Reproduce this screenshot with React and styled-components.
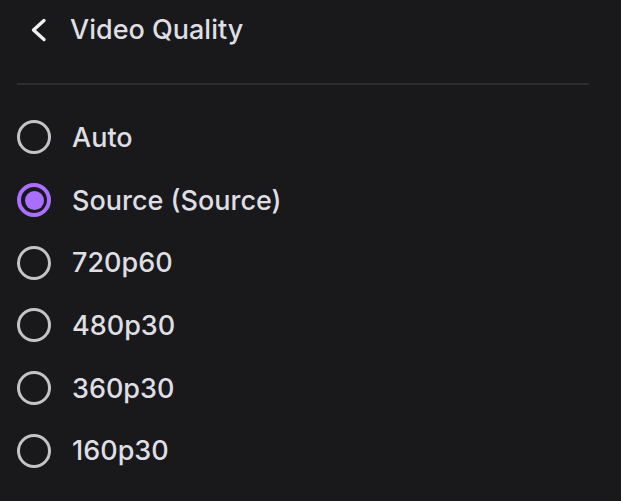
import React, { useState } from 'react';
import styled, { createGlobalStyle } from 'styled-components';

const GlobalStyle = createGlobalStyle`
  html, body {
    margin: 0;
    padding: 0;
    background-color: #19191b;
  }
  body {
    font-family: Inter, "Noto Sans", "Liberation Sans", sans-serif;
    color: #dedee3;
  }
`;

const Panel = styled.div`
  width: 621px;
  height: 501px;
  background-color: #19191b;
  box-sizing: border-box;
  padding: 0 32px 0 17px;
  overflow: hidden;
`;

const Header = styled.div`
  height: 59px;
  display: flex;
  align-items: center;
  padding-left: 11px;
  gap: 22px;
`;

const BackButton = styled.button`
  background: none;
  border: none;
  padding: 0;
  width: 20px;
  height: 26px;
  display: flex;
  align-items: center;
  justify-content: center;
  color: #efeff1;
  cursor: pointer;
`;

const Title = styled.h2`
  margin: 0;
  font-size: 27px;
  font-weight: 500;
  color: #dedee3;
`;

const Divider = styled.div`
  height: 2px;
  background-color: #2d2d2f;
  margin-top: 24px;
  margin-bottom: 21px;
`;

const List = styled.div`
  display: flex;
  flex-direction: column;
`;

const Option = styled.label`
  height: 62.7px;
  display: flex;
  align-items: center;
  gap: 21px;
  cursor: pointer;
`;

const Radio = styled.span`
  width: 34px;
  height: 34px;
  box-sizing: border-box;
  border-radius: 50%;
  border: ${(p) => (p.$checked ? '4px solid #a970ff' : '3px solid #c4c4c8')};
  display: flex;
  align-items: center;
  justify-content: center;
  flex-shrink: 0;
`;

const Dot = styled.span`
  width: 19px;
  height: 19px;
  border-radius: 50%;
  background-color: #a970ff;
`;

const OptionText = styled.span`
  font-size: 27px;
  font-weight: 500;
  color: #dedee3;
`;

const qualities = ['Auto', 'Source (Source)', '720p60', '480p30', '360p30', '160p30'];

const App = () => {
  const [selected, setSelected] = useState('Source (Source)');

  return (
    <>
      <GlobalStyle />
      <Panel>
        <Header>
          <BackButton aria-label="Back">
            <svg width="20" height="26" viewBox="0 0 20 26" fill="none">
              <path d="M16 3.5 L5.5 13 L16 22.5" stroke="currentColor" strokeWidth="3.4" strokeLinecap="round" strokeLinejoin="round" />
            </svg>
          </BackButton>
          <Title>Video Quality</Title>
        </Header>
        <Divider />
        <List>
          {qualities.map((q) => (
            <Option key={q} onClick={() => setSelected(q)}>
              <Radio $checked={selected === q}>{selected === q && <Dot />}</Radio>
              <OptionText>{q}</OptionText>
            </Option>
          ))}
        </List>
      </Panel>
    </>
  );
};

export default App;
